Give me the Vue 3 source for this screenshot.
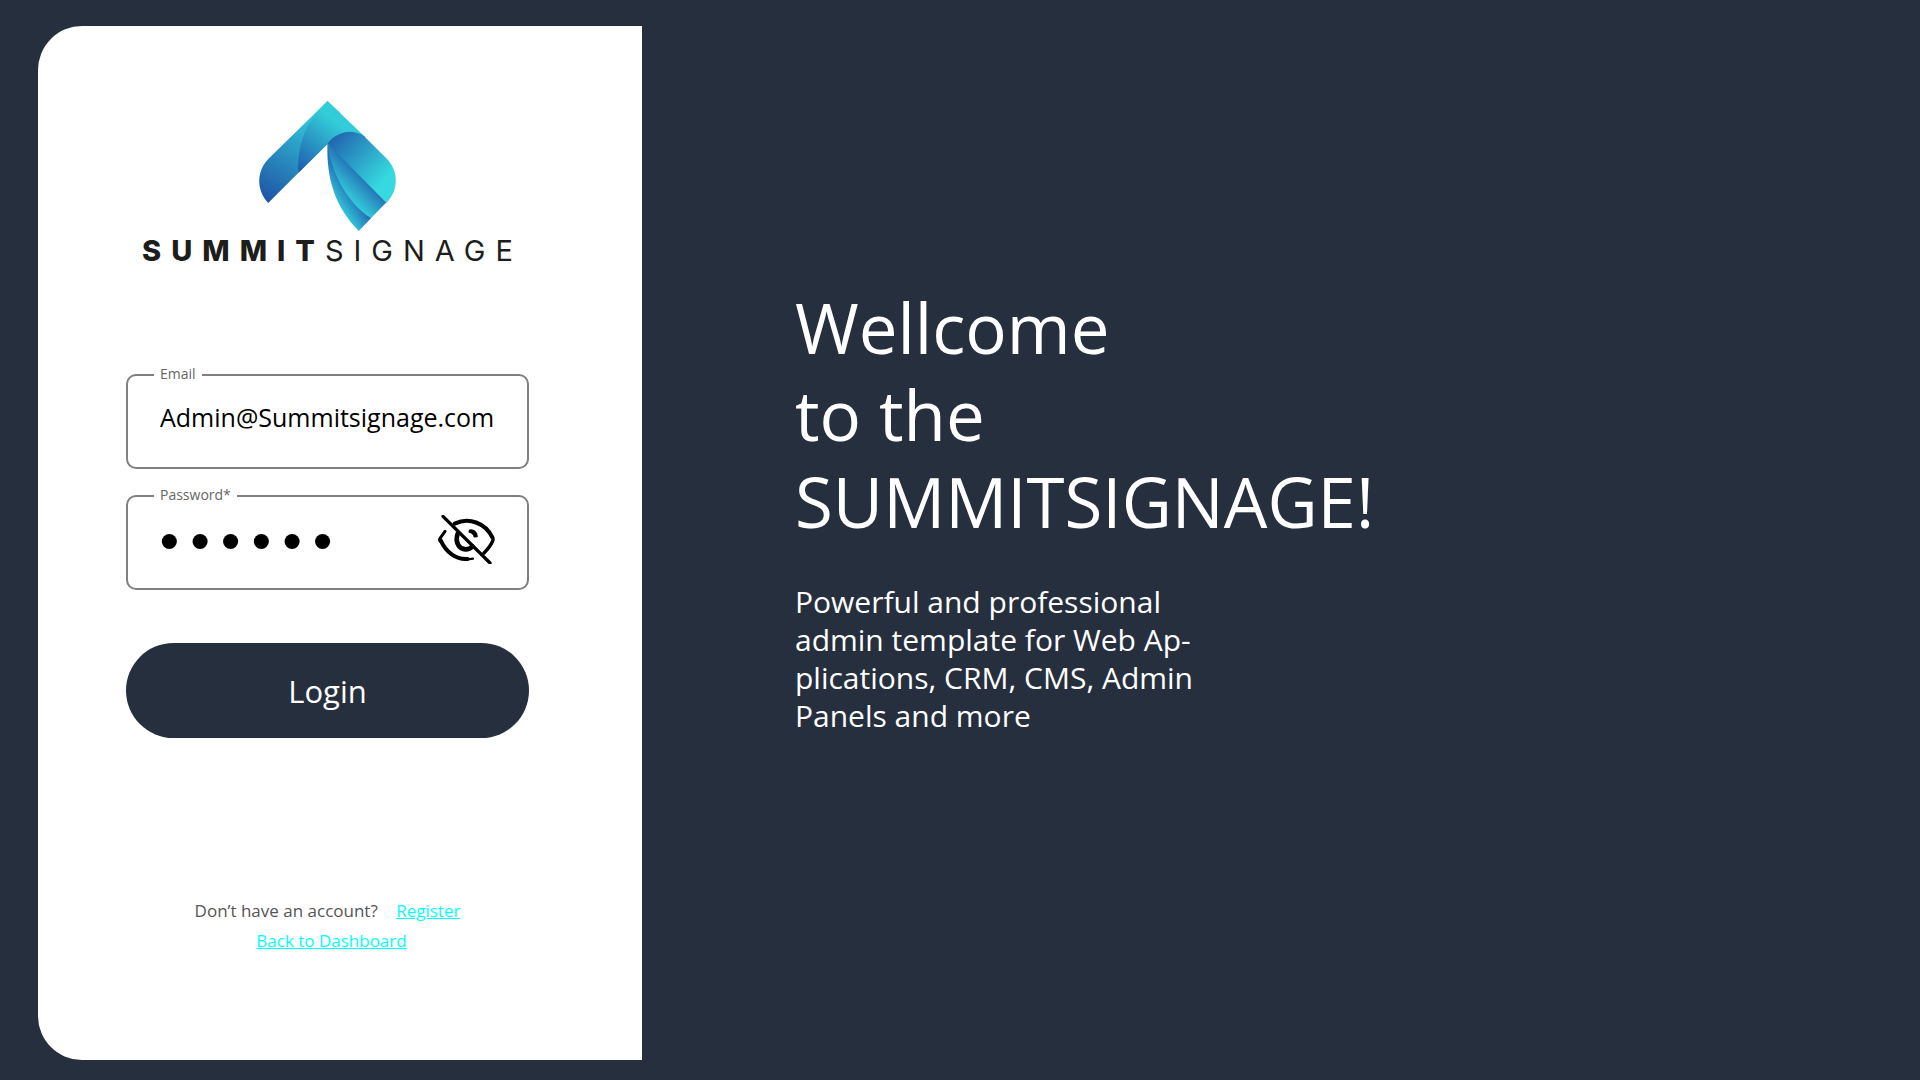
<script setup>
import { ref } from 'vue'

const email = ref('Admin@Summitsignage.com')
const password = ref('summit')
const visible = ref(false)
</script>

<template>
  <main class="page">
    <section class="panel">
      <header class="brand">
        <svg class="mark" viewBox="57 32 410 390" aria-hidden="true">
          <defs>
            <linearGradient id="band" gradientUnits="userSpaceOnUse" x1="80" y1="335" x2="235" y2="75">
              <stop offset="0" stop-color="#1f53a6" />
              <stop offset="1" stop-color="#33cdda" />
            </linearGradient>
            <linearGradient id="fold" gradientUnits="userSpaceOnUse" x1="165" y1="225" x2="275" y2="85">
              <stop offset="0" stop-color="#2060af" />
              <stop offset="1" stop-color="#33cdd9" />
            </linearGradient>
            <linearGradient id="leaf" gradientUnits="userSpaceOnUse" x1="280" y1="140" x2="430" y2="270">
              <stop offset="0" stop-color="#2265b0" />
              <stop offset="1" stop-color="#35d9df" />
            </linearGradient>
            <linearGradient id="middle" gradientUnits="userSpaceOnUse" x1="375" y1="265" x2="324" y2="316">
              <stop offset="0" stop-color="#2371b5" />
              <stop offset="1" stop-color="#33c6d9" />
            </linearGradient>
            <linearGradient id="lower" gradientUnits="userSpaceOnUse" x1="350" y1="328" x2="302" y2="360">
              <stop offset="0" stop-color="#2371b5" />
              <stop offset="1" stop-color="#33cadb" />
            </linearGradient>
          </defs>
          <path fill="url(#band)" d="M262 32 L85 205 C48 243 48 300 84 338 L262 160 L300 68 Z" />
          <path fill="url(#fold)" d="M262 32 L375 140 L262 162 L175 247 C170 170 195 105 239 55 Z" />
          <path fill="url(#lower)" d="M262 160 L310 240 L393 383 L356 422 C285 350 258 265 262 160 Z" />
          <path fill="url(#middle)" d="M262 160 L300 190 L439 336 L393 383 C325 345 270 240 262 160 Z" />
          <path fill="url(#leaf)" d="M262 160 C293 120 340 115 372 138 L440 205 C476 242 476 300 439 337 Z" />
        </svg>
        <p class="wordmark"><strong>SUMMIT</strong>SIGNAGE</p>
      </header>

      <form class="form" @submit.prevent>
        <fieldset class="field">
          <legend><label for="email">Email</label></legend>
          <input id="email" v-model="email" class="value" type="email" />
        </fieldset>
        <fieldset class="field">
          <legend><label for="password">Password*</label></legend>
          <div class="secret">
            <input
              id="password"
              v-model="password"
              class="value"
              :class="{ dots: !visible }"
              :type="visible ? 'text' : 'password'"
            />
            <button class="toggle" type="button" aria-label="Toggle password visibility" @click="visible = !visible">
              <svg viewBox="57 45 171 147" fill="none" stroke="#000" stroke-linecap="round" stroke-linejoin="round">
                <path stroke-width="9" d="M78 94 L63 115 Q61 119 63 123" />
                <path stroke-width="12" d="M65 121 C82 158 112 180 146 177" />
                <path stroke-width="7" d="M140 179 L162 176" />
                <path stroke-width="12" d="M107 71 C150 51 198 68 220 112" />
                <path stroke-width="10" d="M220 111 Q224 118 221 123 C215 137 206 148 195 159" />
                <path stroke-width="14" d="M116 101 C108 125 118 147 140 148 C149 148 156 144 160 139" />
                <path fill="#000" stroke-width="5" d="M152 91 C162 87 175 97 174 109 L166 110 C165 103 161 98 151 96 Z" />
                <path stroke-width="10" d="M72 49 L213 189" />
              </svg>
            </button>
          </div>
        </fieldset>
        <button class="login" type="submit">Login</button>
      </form>

      <footer class="links">
        <p class="register">Don’t have an account? <a href="#register">Register</a></p>
        <p class="back"><a href="#dashboard">Back to Dashboard</a></p>
      </footer>
    </section>

    <section class="welcome">
      <h1>Wellcome<br />to the<br />SUMMITSIGNAGE!</h1>
      <p>
        Powerful and professional<br />admin template for Web Ap-<br />plications, CRM, CMS, Admin<br />Panels and more
      </p>
    </section>
  </main>
</template>

<style>
body {
  margin: 0;
  background: #262f3e;
}
</style>

<style scoped>
.page {
  box-sizing: border-box;
  min-height: 100vh;
  padding: 26px 0 20px 38px;
  display: grid;
  grid-template-columns: minmax(560px, 604fr) 1278fr;
  background: #262f3e;
  font-family: "Open Sans", "Noto Sans", sans-serif;
}

h1,
p {
  margin: 0;
  font-weight: 400;
}

.panel {
  box-sizing: border-box;
  padding: 75px 113px 75px 88px;
  display: flex;
  flex-direction: column;
  border-radius: 44px 0 0 44px;
  background: #fff;
}

.brand {
  display: flex;
  flex-direction: column;
  align-items: center;
}

.mark {
  width: 137px;
  height: 130px;
}

.wordmark {
  font-family: Inter, sans-serif;
  font-size: 29px;
  line-height: 40px;
  letter-spacing: 10px;
  margin-right: -10px;
  white-space: nowrap;
  color: #1d1d1b;
}

.wordmark strong {
  font-weight: 800;
}

.form {
  display: flex;
  flex-direction: column;
  gap: 17px;
  margin-top: 94px;
}

.field {
  box-sizing: border-box;
  min-width: 0;
  height: 104px;
  margin: 0;
  padding: 0 32px;
  border: 2px solid #808080;
  border-radius: 10px;
}

.field legend {
  margin-left: -6px;
  padding: 0 6px 2px;
  font-size: 14px;
  line-height: 18px;
  color: #666;
}

.value {
  box-sizing: border-box;
  width: 100%;
  height: 36px;
  margin: 14px 0 0;
  padding: 0;
  border: 0;
  outline: 0;
  background: transparent;
  font-family: inherit;
  font-size: 25px;
  color: #000;
}

.secret {
  display: flex;
  align-items: center;
  height: 50px;
  margin: 8px 0 0 -6px;
}

.secret .value {
  flex: 1;
  min-width: 0;
  height: 50px;
  margin: 0;
}

.secret .dots {
  margin-top: 8px;
  font-family: "DejaVu Sans", sans-serif;
  font-size: 52px;
}

.toggle {
  display: flex;
  padding: 0;
  border: 0;
  background: none;
  cursor: pointer;
}

.toggle svg {
  width: 57px;
  height: 49px;
}

.login {
  height: 95px;
  margin-top: 36px;
  border: 0;
  border-radius: 48px;
  background: #262f3e;
  font-family: inherit;
  font-size: 31px;
  color: #fff;
  cursor: pointer;
}

.links {
  margin-top: 158px;
  text-align: center;
  font-size: 17px;
  line-height: 30px;
  color: #555;
}

.links a {
  color: #00ffff;
}

.register a {
  margin-left: 14px;
}

.back {
  padding-left: 8px;
}

.welcome {
  padding: 258px 32px 0 153px;
  color: #fff;
}

.welcome h1 {
  font-size: 69px;
  line-height: 87px;
}

.welcome p {
  margin-top: 38px;
  font-size: 30px;
  line-height: 38px;
}
</style>
